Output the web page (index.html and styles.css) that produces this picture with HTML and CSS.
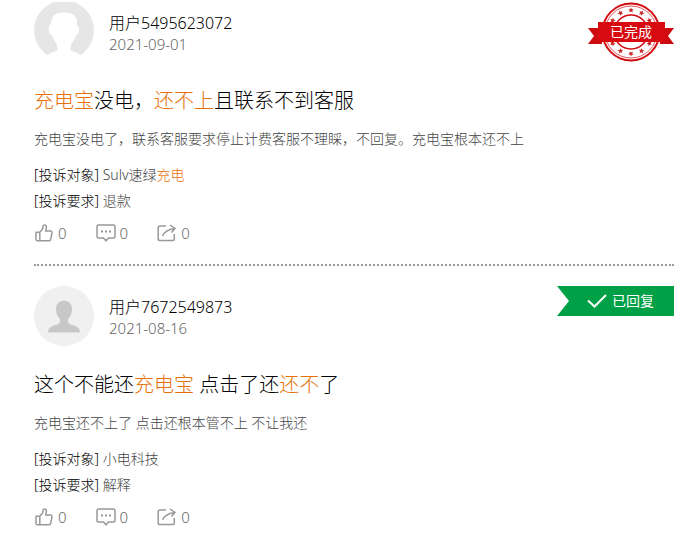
FILE: index.html
```
<!DOCTYPE html>
<html lang="zh-CN">
<head>
    <meta charset="UTF-8">
    <meta name="viewport" content="width=device-width, initial-scale=1">
    <title>投诉列表</title>
    <link rel="stylesheet" href="styles.css">
</head>
<body>
    <svg class="sprite" aria-hidden="true">
        <symbol id="icon-like" viewBox="0 0 18 18">
            <path d="M1 8.2h3.8v8.6H2.4Q1 16.8 1 15.4zM4.8 8.2l3-3.4V2.6Q8.2 1 9.6 1q1.8 0 1.8 2.2L10.8 7h4.6q1.9.2 1.600 2l-1.300 6.200q-.4 1.600-2 1.600H4.800"/>
        </symbol>
        <symbol id="icon-comment" viewBox="0 0 20 18">
            <path d="M2.500 1h15q1.500 0 1.500 1.500v10q0 1.500-1.500 1.500H12.500L10 16.800 7.500 14h-5Q1 14 1 12.500v-10Q1 1 2.500 1z"/>
            <path d="M5 7.500h2M9 7.500h2M13 7.500h2" stroke-width="2"/>
        </symbol>
        <symbol id="icon-share" viewBox="0 0 20 18">
            <path d="M9 2H3Q1.200 2 1.200 3.800v10.900q0 1.800 1.800 1.800h12.500q1.800 0 1.800-1.800V10"/>
            <path d="M5.500 12Q8 6 17.500 4.500M13 1l5 3.500L14.500 8.500"/>
        </symbol>
    </svg>

    <main class="list">
        <article class="item">
            <header class="user">
                <svg class="avatar" viewBox="0 0 60 60" aria-hidden="true">
                    <path fill="#e6e6e6" d="M13 53A30 30 0 1 1 47 53Q42 50 36.500 48.500L37 42Q41 38 42 33q3-1 3-5t-2-5Q44 10 30 10.500 17 10 17 22q-3 1-2 6 0 4 3 5 1 5 5 9l.5 6.500Q18 50 13 53z"/>
                </svg>
                <div class="user-info">
                    <a class="name" href="#">用户5495623072</a>
                    <time class="date">2021-09-01</time>
                </div>
                <svg class="stamp" viewBox="0 0 86 60" role="img" aria-label="已完成">
                    <path fill="#cc0a10" d="M0 26h14v16H0l6-8z M86 26H72v16h14l-6-8z"/>
                    <circle cx="43" cy="30" r="29.500" fill="#d20a10"/>
                    <circle cx="43" cy="30" r="27.500" fill="#fff"/>
                    <circle cx="43" cy="30" r="26" fill="none" stroke="#e0575b"/>
                    <circle cx="43" cy="30" r="17" fill="none" stroke="#d20a10" stroke-width="1.500"/>
                    <g fill="#c9252a">
                        <path id="star" d="M43 5.500l.8 1.700 1.900.2-1.400 1.300.4 1.900-1.700-1-1.700 1 .4-1.900-1.400-1.300 1.900-.2z"/>
                        <use href="#star" transform="rotate(29 43 30)"/>
                        <use href="#star" transform="rotate(58 43 30)"/>
                        <use href="#star" transform="rotate(-29 43 30)"/>
                        <use href="#star" transform="rotate(-58 43 30)"/>
                        <use href="#star" transform="rotate(122 43 30)"/>
                        <use href="#star" transform="rotate(151 43 30)"/>
                        <use href="#star" transform="rotate(180 43 30)"/>
                        <use href="#star" transform="rotate(209 43 30)"/>
                        <use href="#star" transform="rotate(238 43 30)"/>
                    </g>
                    <path fill="#d70a10" d="M10 20h67v20H10z"/>
                    <text class="stamp-text" x="43" y="35">已完成</text>
                </svg>
            </header>
            <h2 class="title"><a href="#"><em>充电宝</em>没电，<em>还不上</em>且联系不到客服</a></h2>
            <p class="desc">充电宝没电了，联系客服要求停止计费客服不理睬，不回复。充电宝根本还不上</p>
            <ul class="info">
                <li><span class="label">[投诉对象]</span> Sulv速绿<em>充电</em></li>
                <li><span class="label">[投诉要求]</span> 退款</li>
            </ul>
            <div class="actions">
                <button type="button" aria-label="点赞 0"><svg class="icon"><use href="#icon-like"/></svg>0</button>
                <button type="button" aria-label="评论 0"><svg class="icon"><use href="#icon-comment"/></svg>0</button>
                <button type="button" aria-label="分享 0"><svg class="icon"><use href="#icon-share"/></svg>0</button>
            </div>
        </article>

        <article class="item">
            <header class="user">
                <svg class="avatar" viewBox="0 0 60 60" aria-hidden="true">
                    <circle cx="30" cy="30" r="30" fill="#f0f0f0"/>
                    <path fill="#c8c8c8" d="M30 14.500c5 0 8 3.500 8 9 0 4-1.500 7-4 9.500v3.500q1 1.500 4.500 2.500c5 1.500 7 3 7.500 6.500q0 1-1 1H15q-1 0-1-1c.5-3.500 2.500-5 7.500-6.500q3.500-1 4.500-2.500V33c-2.500-2.500-4-5.500-4-9.500 0-5.500 3-9 8-9z"/>
                </svg>
                <div class="user-info">
                    <a class="name" href="#">用户7672549873</a>
                    <time class="date">2021-08-16</time>
                </div>
                <span class="replied">
                    <svg class="check" viewBox="0 0 20 14" aria-hidden="true"><path d="M1 6.500L7.500 12.500 19 1"/></svg>已回复
                </span>
            </header>
            <h2 class="title"><a href="#">这个不能还<em>充电宝</em> 点击了还<em>还不</em>了</a></h2>
            <p class="desc">充电宝还不上了 点击还根本管不上 不让我还</p>
            <ul class="info">
                <li><span class="label">[投诉对象]</span> 小电科技</li>
                <li><span class="label">[投诉要求]</span> 解释</li>
            </ul>
            <div class="actions">
                <button type="button" aria-label="点赞 0"><svg class="icon"><use href="#icon-like"/></svg>0</button>
                <button type="button" aria-label="评论 0"><svg class="icon"><use href="#icon-comment"/></svg>0</button>
                <button type="button" aria-label="分享 0"><svg class="icon"><use href="#icon-share"/></svg>0</button>
            </div>
        </article>
    </main>
</body>
</html>
```
FILE: styles.css
```
* {box-sizing: border-box;}
body {margin: 0; background: #fff; color: #444; font: 300 14px/20px "Noto Sans", "Noto Sans CJK SC", sans-serif;}
a {color: inherit; text-decoration: none;}
em {font-style: normal; color: #e87008;}
.sprite {display: none;}

.list {padding: 2px 21px 0 34px;}
.item {padding-bottom: 21px;}
.item + .item {border-top: 2px dotted #999; padding-top: 20px;}

/* 用户信息 */
.user {display: flex; align-items: flex-start;}
.avatar {width: 60px; height: 60px; margin-right: 15px;}
.user-info {flex: 1; display: flex; flex-direction: column; padding-top: 10px;}
.name {font-size: 16px; line-height: 22px; color: #000;}
.date {font-size: 15px; color: #666;}

/* 状态标记 */
.stamp {width: 86px; height: 60px;}
.stamp-text {fill: #fff; font-size: 14px; font-weight: 400; text-anchor: middle;}
.replied {display: flex; align-items: center; gap: 5px; height: 30px; padding: 0 20px 0 30px; background: #00a046; color: #fff; font-weight: 400; clip-path: polygon(0 0, 100% 0, 100% 100%, 0 100%, 12px 50%);}
.check {width: 20px; height: 14px; fill: none; stroke: #fff; stroke-width: 2;}

/* 投诉内容 */
.title {margin: 24px 0 13px; font-size: 20px; line-height: 30px; font-weight: 300; color: #000;}
.desc {margin: 0;}
.info {list-style: none; margin: 13px 0 9px; padding: 0; line-height: 26px;}
.label {color: #000;}

/* 操作按钮 */
.actions {display: flex; gap: 29px;}
.actions button {display: flex; align-items: center; gap: 4px; padding: 0; border: 0; background: none; color: #666; font: inherit; font-size: 15px; cursor: pointer;}
.icon {width: 20px; height: 18px; fill: none; stroke: #999; stroke-width: 1.500;}
```
